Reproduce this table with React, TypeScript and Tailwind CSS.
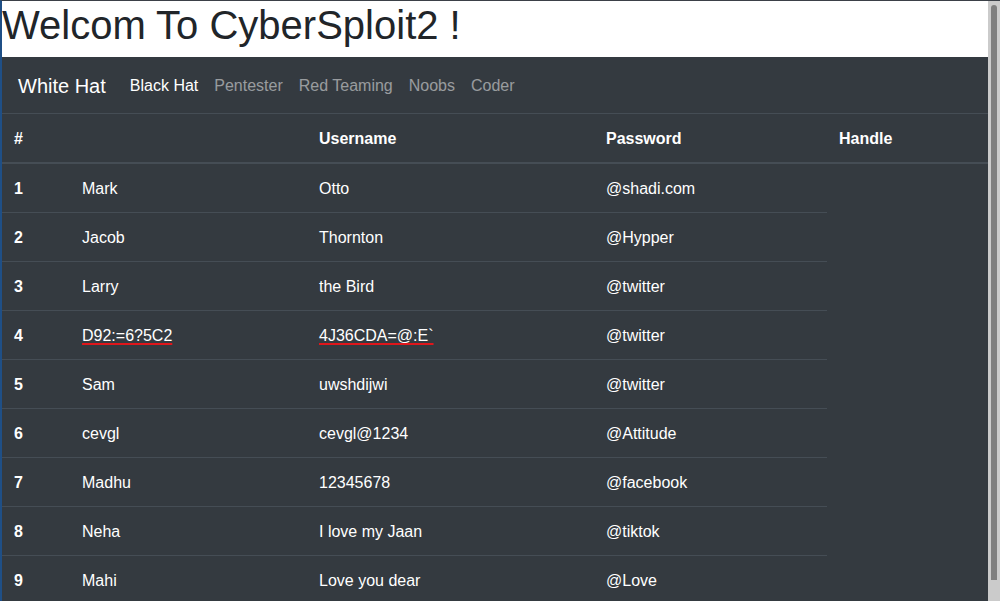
const rows = [
  { n: "1", name: "Mark", user: "Otto", handle: "@shadi.com" },
  { n: "2", name: "Jacob", user: "Thornton", handle: "@Hypper" },
  { n: "3", name: "Larry", user: "the Bird", handle: "@twitter" },
  { n: "4", name: "D92:=6?5C2", user: "4J36CDA=@:E`", handle: "@twitter", flagged: true },
  { n: "5", name: "Sam", user: "uwshdijwi", handle: "@twitter" },
  { n: "6", name: "cevgl", user: "cevgl@1234", handle: "@Attitude" },
  { n: "7", name: "Madhu", user: "12345678", handle: "@facebook" },
  { n: "8", name: "Neha", user: "I love my Jaan", handle: "@tiktok" },
  { n: "9", name: "Mahi", user: "Love you dear", handle: "@Love" },
];

const links = ["Pentester", "Red Teaming", "Noobs", "Coder"];

function Scrollbar() {
  return (
    <div className="flex w-[12px] shrink-0 flex-col bg-[#cbcbcb] px-[3px] pt-[4px] pb-[21px]">
      <div className="flex-1 rounded-t-[4px] bg-[#7f7f7f]" />
    </div>
  );
}

export default function App() {
  const misspelt = "underline decoration-[#e0161b] decoration-2 underline-offset-[2px]";

  return (
    <div className="flex h-[601px] overflow-hidden border-t border-l-2 border-t-[#3b4047] border-l-[#1f4f86] bg-white font-['Liberation_Sans',Arial,sans-serif] text-[#212529]">
      <div className="min-w-0 flex-1 overflow-hidden">
        <h1 className="mb-2 text-[40px] leading-[48px] font-normal">Welcom To CyberSploit2 !</h1>

        <nav className="flex items-center bg-[#343a40] px-4 py-2">
          <span className="mr-4 pt-[6px] pb-[4px] text-[20px] leading-[30px] text-white">White Hat</span>
          <ul className="flex">
            <li className="px-2 pt-[9px] pb-[7px] text-base leading-6 text-white">Black Hat</li>
            {links.map((l) => (
              <li key={l} className="px-2 pt-[9px] pb-[7px] text-base leading-6 text-white/50">
                {l}
              </li>
            ))}
          </ul>
        </nav>

        <table className="mb-4 w-full table-fixed border-collapse bg-[#343a40] text-base leading-6 text-white">
          <thead>
            <tr>
              <th className="w-[68px] border-t border-b-2 border-[#454d55] px-3 pt-[13px] pb-[11px] text-left font-bold">#</th>
              <th className="w-[237px] border-t border-b-2 border-[#454d55] px-3 pt-[13px] pb-[11px] text-left font-bold"></th>
              <th className="w-[287px] border-t border-b-2 border-[#454d55] px-3 pt-[13px] pb-[11px] text-left font-bold">Username</th>
              <th className="w-[233px] border-t border-b-2 border-[#454d55] px-3 pt-[13px] pb-[11px] text-left font-bold">Password</th>
              <th className="border-t border-b-2 border-[#454d55] px-3 pt-[13px] pb-[11px] text-left font-bold">Handle</th>
            </tr>
          </thead>
          <tbody>
            {rows.map((r) => (
              <tr key={r.n}>
                <th className="border-t border-[#454d55] px-3 pt-[13px] pb-[11px] text-left font-bold">{r.n}</th>
                <td className="border-t border-[#454d55] px-3 pt-[13px] pb-[11px]">
                  <span className={r.flagged ? misspelt : ""}>{r.name}</span>
                </td>
                <td className="border-t border-[#454d55] px-3 pt-[13px] pb-[11px]">
                  <span className={r.flagged ? misspelt : ""}>{r.user}</span>
                </td>
                <td className="border-t border-[#454d55] px-3 pt-[13px] pb-[11px]">{r.handle}</td>
              </tr>
            ))}
          </tbody>
        </table>
      </div>
      <Scrollbar />
    </div>
  );
}
